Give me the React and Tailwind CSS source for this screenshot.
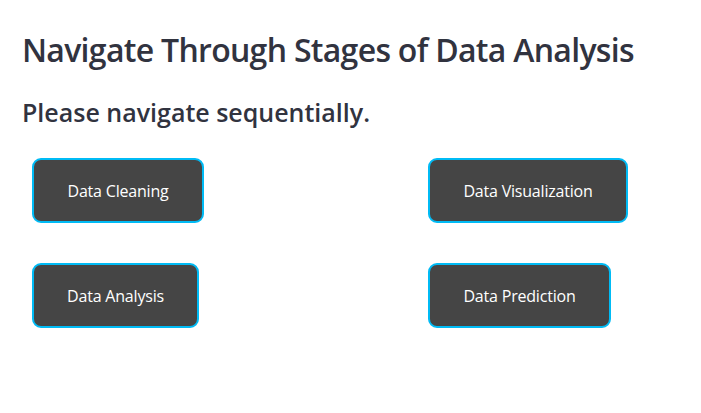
import React from "react";

const stages = [
  { label: "Data Cleaning", w: "w-[172px]" },
  { label: "Data Visualization", w: "w-[200px]" },
  { label: "Data Analysis", w: "w-[167px]" },
  { label: "Data Prediction", w: "w-[183px]" },
];

export default function App() {
  return (
    <div className="w-[701px] h-[413px] bg-white text-[#31333f] font-['Open_Sans',sans-serif] px-[22px] pt-[28px]">
      <h1 className="text-[32px] leading-[44px] font-semibold tracking-[-0.7px]">
        Navigate Through Stages of Data Analysis
      </h1>
      <h3 className="mt-[23px] text-[25px] leading-[34px] font-semibold">
        Please navigate sequentially.
      </h3>
      <div className="mt-[29px] grid grid-cols-[396px_auto] gap-y-[40px] pl-[10px]">
        {stages.map((s) => (
          <button
            key={s.label}
            className={`${s.w} h-[65px] rounded-[9px] border-2 border-[#00bbf5] bg-[#454545] text-white text-[16px] font-medium tracking-[-0.2px]`}
          >
            {s.label}
          </button>
        ))}
      </div>
    </div>
  );
}
